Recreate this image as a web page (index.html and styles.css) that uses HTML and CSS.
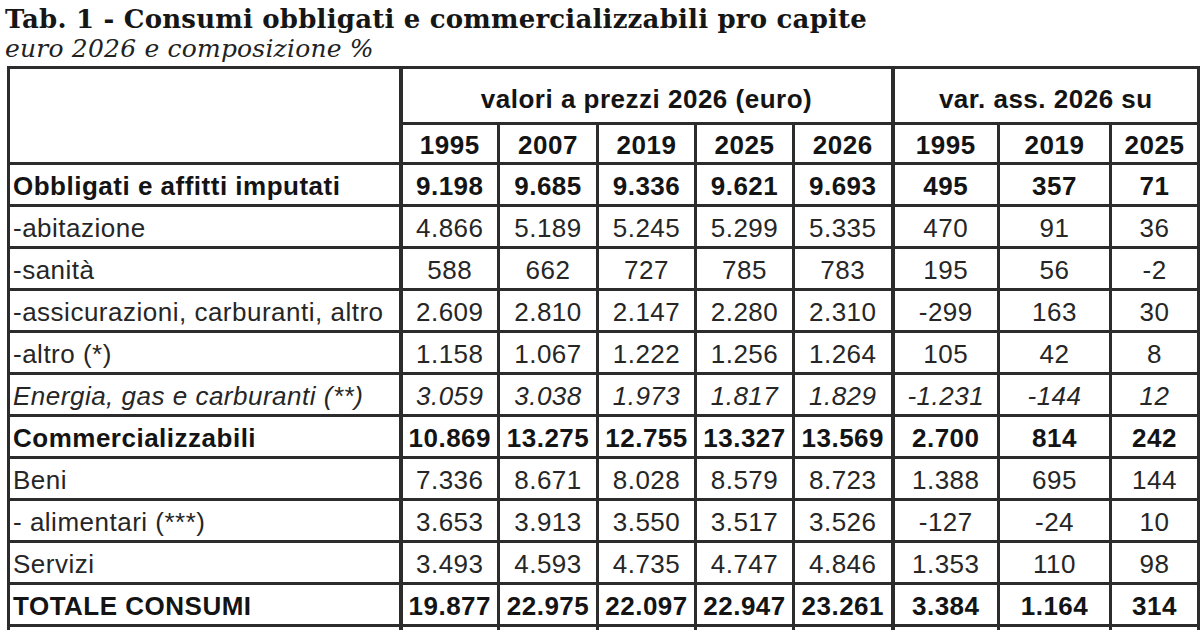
FILE: index.html
```html
<!DOCTYPE html>
<html lang="it">
<head>
<meta charset="utf-8">
<title>Tab. 1 - Consumi obbligati e commercializzabili pro capite</title>
<link rel="stylesheet" href="styles.css">
</head>
<body>
<div class="heading">
  <h1 class="title">Tab. 1 - Consumi obbligati e commercializzabili pro capite</h1>
  <p class="subtitle">euro 2026 e composizione %</p>
</div>
<table class="data">
  <colgroup>
    <col class="c-label">
    <col class="c-98"><col class="c-99"><col class="c-98"><col class="c-98"><col class="c-99">
    <col class="c-106"><col class="c-112"><col class="c-88">
  </colgroup>
  <thead>
    <tr class="h1">
      <th class="label" rowspan="2"></th>
      <th class="group sep" colspan="5">valori a prezzi 2026 (euro)</th>
      <th class="group sep" colspan="3">var. ass. 2026 su</th>
    </tr>
    <tr class="h2">
      <th class="sep">1995</th><th>2007</th><th>2019</th><th>2025</th><th>2026</th>
      <th class="sep">1995</th><th>2019</th><th>2025</th>
    </tr>
  </thead>
  <tbody>
    <tr class="bold">
      <td class="label">Obbligati e affitti imputati</td>
      <td class="sep">9.198</td><td>9.685</td><td>9.336</td><td>9.621</td><td>9.693</td>
      <td class="sep">495</td><td>357</td><td>71</td>
    </tr>
    <tr>
      <td class="label">-abitazione</td>
      <td class="sep">4.866</td><td>5.189</td><td>5.245</td><td>5.299</td><td>5.335</td>
      <td class="sep">470</td><td>91</td><td>36</td>
    </tr>
    <tr>
      <td class="label">-sanità</td>
      <td class="sep">588</td><td>662</td><td>727</td><td>785</td><td>783</td>
      <td class="sep">195</td><td>56</td><td>-2</td>
    </tr>
    <tr>
      <td class="label">-assicurazioni, carburanti, altro</td>
      <td class="sep">2.609</td><td>2.810</td><td>2.147</td><td>2.280</td><td>2.310</td>
      <td class="sep">-299</td><td>163</td><td>30</td>
    </tr>
    <tr>
      <td class="label">-altro (*)</td>
      <td class="sep">1.158</td><td>1.067</td><td>1.222</td><td>1.256</td><td>1.264</td>
      <td class="sep">105</td><td>42</td><td>8</td>
    </tr>
    <tr class="italic">
      <td class="label">Energia, gas e carburanti (**)</td>
      <td class="sep">3.059</td><td>3.038</td><td>1.973</td><td>1.817</td><td>1.829</td>
      <td class="sep">-1.231</td><td>-144</td><td>12</td>
    </tr>
    <tr class="bold">
      <td class="label">Commercializzabili</td>
      <td class="sep">10.869</td><td>13.275</td><td>12.755</td><td>13.327</td><td>13.569</td>
      <td class="sep">2.700</td><td>814</td><td>242</td>
    </tr>
    <tr>
      <td class="label">Beni</td>
      <td class="sep">7.336</td><td>8.671</td><td>8.028</td><td>8.579</td><td>8.723</td>
      <td class="sep">1.388</td><td>695</td><td>144</td>
    </tr>
    <tr>
      <td class="label">- alimentari (***)</td>
      <td class="sep">3.653</td><td>3.913</td><td>3.550</td><td>3.517</td><td>3.526</td>
      <td class="sep">-127</td><td>-24</td><td>10</td>
    </tr>
    <tr>
      <td class="label">Servizi</td>
      <td class="sep">3.493</td><td>4.593</td><td>4.735</td><td>4.747</td><td>4.846</td>
      <td class="sep">1.353</td><td>110</td><td>98</td>
    </tr>
    <tr class="bold">
      <td class="label">TOTALE CONSUMI</td>
      <td class="sep">19.877</td><td>22.975</td><td>22.097</td><td>22.947</td><td>23.261</td>
      <td class="sep">3.384</td><td>1.164</td><td>314</td>
    </tr>
    <tr class="empty">
      <td class="label"></td>
      <td class="sep"></td><td></td><td></td><td></td><td></td>
      <td class="sep"></td><td></td><td></td>
    </tr>
  </tbody>
</table>
</body>
</html>
```

FILE: styles.css
```css
html, body {
  margin: 0;
  padding: 0;
  background: #ffffff;
}

body {
  width: 1200px;
  height: 630px;
  overflow: hidden;
  color: #1a1a1a;
}

.heading {
  padding: 3px 0 0 5px;
  height: 66px;
  box-sizing: border-box;
}

.title {
  margin: 0;
  font-family: "DejaVu Serif", "Liberation Serif", serif;
  font-weight: bold;
  font-size: 26px;
  line-height: 32px;
  letter-spacing: 0.2px;
  color: #161616;
}

.subtitle {
  margin: 0;
  font-family: "DejaVu Serif", "Liberation Serif", serif;
  font-style: italic;
  font-size: 25px;
  line-height: 28px;
  letter-spacing: 0.2px;
  color: #222222;
}

.data {
  margin-left: 7px;
  width: 1193px;
  table-layout: fixed;
  border-collapse: collapse;
  font-family: "Liberation Sans", Arial, sans-serif;
  font-size: 26px;
  letter-spacing: 0.5px;
  color: #262626;
}

.c-label { width: 392px; }
.c-98 { width: 98px; }
.c-99 { width: 99px; }
.c-106 { width: 106px; }
.c-112 { width: 112px; }
.c-88 { width: 88px; }

.data th,
.data td {
  border: 3px solid #2c2c2c;
  padding: 4px 0 0 0;
  text-align: center;
  white-space: nowrap;
  overflow: hidden;
}

.data th {
  font-weight: bold;
  color: #141414;
}

.data .sep {
  border-left-width: 4px;
}

.data .label {
  text-align: left;
  padding-left: 3px;
}

.h1 { height: 56px; }
.h1 .group { padding-top: 8px; }
.h2 { height: 40px; }

.data tbody tr { height: 42px; }

.data tbody tr.empty { height: 4px; }

.data .empty td {
  padding: 0;
  border-bottom-style: hidden;
}

.bold td {
  font-weight: bold;
  color: #141414;
}

.italic td {
  font-style: italic;
}
```
